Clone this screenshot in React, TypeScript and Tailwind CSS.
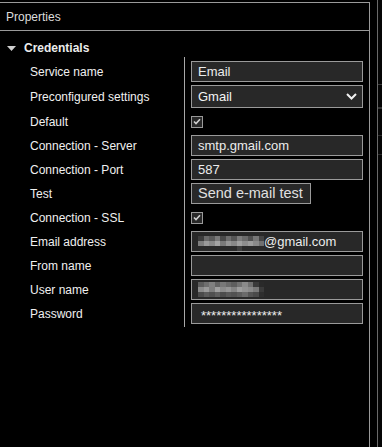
import React from "react";

const emailMosaic = [
  ["bg-[#3c3c3c]", "bg-[#6a6a6a]", "bg-[#5a5a5a]", "bg-[#7a7a7a]", "bg-[#4a4a4a]", "bg-[#6e6e6e]", "bg-[#565656]", "bg-[#7c7c7c]", "bg-[#6a6a6a]", "bg-[#505050]", "bg-[#767676]", "bg-[#444444]"],
  ["bg-[#7e7e7e]", "bg-[#9a9a9a]", "bg-[#8a8a8a]", "bg-[#a4a4a4]", "bg-[#7a7a7a]", "bg-[#969696]", "bg-[#888888]", "bg-[#a0a0a0]", "bg-[#8e8e8e]", "bg-[#9c9c9c]", "bg-[#8a8a8a]", "bg-[#707070]"],
  ["bg-[#2a2a2a]", "bg-[#2a2a2a]", "bg-[#2a2a2a]", "bg-[#2a2a2a]", "bg-[#2a2a2a]", "bg-[#2a2a2a]", "bg-[#2a2a2a]", "bg-[#3e3e3e]", "bg-[#2a2a2a]", "bg-[#2a2a2a]", "bg-[#2a2a2a]", "bg-[#2a2a2a]"],
];

const userMosaic = [
  ["bg-[#5c5c5c]", "bg-[#6e6e6e]", "bg-[#808080]", "bg-[#646464]", "bg-[#787878]", "bg-[#6a6a6a]", "bg-[#5e5e5e]", "bg-[#727272]", "bg-[#8a8a8a]", "bg-[#707070]", "bg-[#3a3a3a]", "bg-[#2a2a2a]"],
  ["bg-[#8a8a8a]", "bg-[#9a9a9a]", "bg-[#7e7e7e]", "bg-[#a0a0a0]", "bg-[#8c8c8c]", "bg-[#969696]", "bg-[#848484]", "bg-[#9e9e9e]", "bg-[#929292]", "bg-[#8a8a8a]", "bg-[#7a7a7a]", "bg-[#3a3a3a]"],
  ["bg-[#4a4a4a]", "bg-[#5a5a5a]", "bg-[#505050]", "bg-[#5e5e5e]", "bg-[#4c4c4c]", "bg-[#585858]", "bg-[#525252]", "bg-[#5c5c5c]", "bg-[#6a6a6a]", "bg-[#545454]", "bg-[#4a4a4a]", "bg-[#2e2e2e]"],
];

function Mosaic({ rows }: { rows: string[][] }) {
  return (
    <div className="flex flex-col">
      {rows.map((r, i) => (
        <div key={i} className="flex">
          {r.map((c, j) => (
            <div key={j} className={`w-[5.5px] h-[5px] ${c}`} />
          ))}
        </div>
      ))}
    </div>
  );
}

function Input({ children }: { children?: React.ReactNode }) {
  return (
    <div className="w-[172px] h-[21px] border border-[#9a9a9a] bg-[#282828] flex items-center pl-[6px] text-[13px] text-[#ececec] leading-none">
      {children}
    </div>
  );
}

function Check() {
  return (
    <div className="w-[12px] h-[12px] border border-[#9a9a9a] bg-[#282828] flex items-center justify-center">
      <svg width="8" height="7" viewBox="0 0 8 7">
        <path d="M1 3.5 L3 5.5 L7 1.2" stroke="#d0d0d0" strokeWidth="1.6" fill="none" />
      </svg>
    </div>
  );
}

const labels = [
  "Service name",
  "Preconfigured settings",
  "Default",
  "Connection - Server",
  "Connection - Port",
  "Test",
  "Connection - SSL",
  "Email address",
  "From name",
  "User name",
  "Password",
];

export default function App() {
  return (
    <div
      className="w-[382px] h-[447px] bg-black flex overflow-hidden"
      style={{ fontFamily: '"Liberation Sans", Arial, sans-serif' }}
    >
      <div className="w-[370px] h-full pt-[2px] flex flex-col">
        <div className="w-[370px] border-t border-r border-[#9a9a9a] flex-1 flex flex-col">
          <div className="h-[28px] border-b border-[#9a9a9a] flex items-center pl-[6px] text-[12px] text-[#dcdcdc]">
            Properties
          </div>
          <div className="mt-[7px] h-[20px] flex items-center">
            <svg className="ml-[7px]" width="9" height="5" viewBox="0 0 9 5">
              <path d="M0 0 L9 0 L4.5 5 Z" fill="#d0d0d0" />
            </svg>
            <span className="ml-[8px] text-[12px] font-bold text-[#ececec]">Credentials</span>
          </div>
          <div className="flex -mt-[1px]">
            <div className="w-[184px] pt-[4px] flex flex-col gap-[3px]">
              {labels.map((l, i) => (
                <div
                  key={l}
                  className={`${i === 1 ? "h-[23px]" : "h-[21px]"} flex items-center pl-[30px] text-[12px] text-[#f0f0f0]`}
                >
                  {l}
                </div>
              ))}
            </div>
            <div className="border-l border-[#a8a8a8] pl-[6px] pt-[4px] pb-[3px] flex flex-col gap-[3px]">
              <Input>Email</Input>
              <div className="w-[172px] h-[23px] border border-[#9a9a9a] bg-[#282828] flex items-center justify-between pl-[6px] pr-[5px] text-[13px] text-[#f4f4f4]">
                <span>Gmail</span>
                <svg width="11" height="7" viewBox="0 0 11 7">
                  <path d="M1 1 L5.5 5.5 L10 1" stroke="#f0f0f0" strokeWidth="2" fill="none" />
                </svg>
              </div>
              <div className="h-[21px] flex items-center">
                <Check />
              </div>
              <Input>smtp.gmail.com</Input>
              <Input>587</Input>
              <div className="h-[21px] flex">
                <div className="w-[120px] h-[21px] border border-[#9a9a9a] bg-[#282828] flex items-center pl-[6px] text-[14.5px] text-[#e0e0e0] leading-none whitespace-nowrap">
                  Send e-mail test
                </div>
              </div>
              <div className="h-[21px] flex items-center">
                <Check />
              </div>
              <Input>
                <div className="mt-[3px]">
                  <Mosaic rows={emailMosaic} />
                </div>
                <span>@gmail.com</span>
              </Input>
              <Input />
              <Input>
                <Mosaic rows={userMosaic} />
              </Input>
              <Input>
                <span className="pl-[3px] text-[13px] pt-[3px]">****************</span>
              </Input>
            </div>
          </div>
        </div>
      </div>
      <div className="w-[7px]" />
      <div className="w-[1px] h-full bg-[#6a6a6a]" />
      <div className="flex-1 h-full bg-[#050505] flex flex-col">
        <div className="h-[84px]" />
        <div className="h-[1px] bg-[#3a3a3a]" />
        <div className="h-[22px]" />
        <div className="h-[2px] bg-[#333333]" />
        <div className="h-[26px]" />
        <div className="h-[1px] bg-[#2a2a2a]" />
        <div className="h-[18px]" />
        <div className="h-[1px] bg-[#2a2a2a]" />
      </div>
    </div>
  );
}
